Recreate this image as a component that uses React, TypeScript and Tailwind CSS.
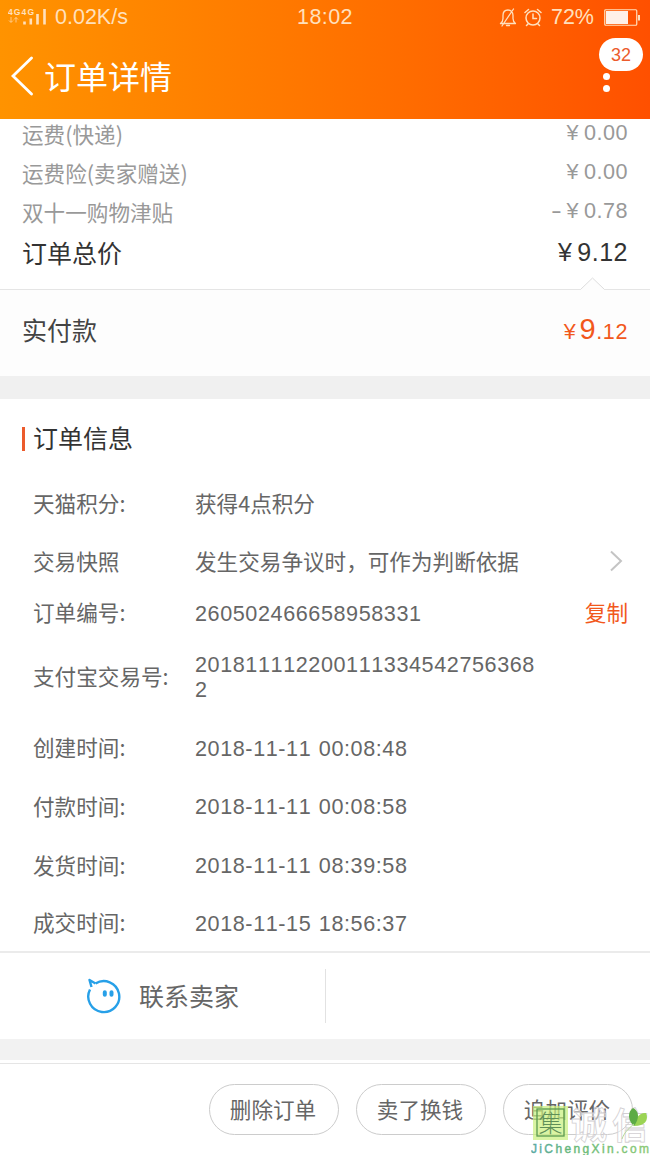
import clsx from 'clsx';

const fees = [
  { label: '运费(快递)', value: '￥0.00' },
  { label: '运费险(卖家赠送)', value: '￥0.00' },
  { label: '双十一购物津贴', value: '-￥0.78' },
];

const orderInfo = [
  { label: '天猫积分:', value: '获得4点积分', height: 'h-[58px]' },
  { label: '交易快照', value: '发生交易争议时，可作为判断依据', height: 'h-[58px]', arrow: true },
  { label: '订单编号:', value: '260502466658958331', height: 'h-11', copy: true },
  { label: '支付宝交易号:', value: '2018111122001113345427563682', height: 'h-[84px]' },
  { label: '创建时间:', value: '2018-11-11 00:08:48', height: 'h-[58px]' },
  { label: '付款时间:', value: '2018-11-11 00:08:58', height: 'h-[59px]' },
  { label: '发货时间:', value: '2018-11-11 08:39:58', height: 'h-[59px]' },
  { label: '成交时间:', value: '2018-11-15 18:56:37', height: 'h-14' },
];

const actions = ['删除订单', '卖了换钱', '追加评价'];

const num = "font-['Liberation_Sans','Noto_Sans_CJK_SC',sans-serif] [font-kerning:none]";

function Price({ value, className }: { value: string; className?: string }) {
  const [sign, amount] = value.split('￥');
  return (
    <span className={clsx(num, 'flex items-center tracking-[0.5px]', className)}>
      {sign && <span className="mr-1.5 scale-x-150">{sign}</span>}
      <span className="mr-[5px]">¥</span>
      <span>{amount}</span>
    </span>
  );
}

function StatusBar() {
  return (
    <div className={clsx(num, 'relative flex h-[34px] items-center justify-between pr-2.5 pl-2 text-[21.5px] text-[#ffe0bd]')}>
      <div className="flex items-center gap-2">
        <svg width="39" height="18" viewBox="0 0 39 18" fill="none">
          <text x="0" y="7" fontSize="8.5" fontWeight="bold" fill="currentColor" fontFamily="Liberation Sans" textLength="26">
            4G4G
          </text>
          <path d="M3 9v5M1 12.500l2 2 2-2M8 14.500v-5M6 11.500l2-2 2 2" stroke="currentColor" strokeWidth="1" opacity=".7" />
          <path d="M16.500 13.500v3M22.800 10.500v6M29.500 6v10.500M36.500 1v15.500" stroke="currentColor" strokeWidth="2.600" />
        </svg>
        <span>0.02K/s</span>
      </div>
      <span className="absolute left-1/2 -translate-x-1/2 tracking-[0.4px]">18:02</span>
      <div className="flex items-center">
        <svg width="18" height="19" viewBox="0 0 18 19" fill="none" stroke="currentColor" strokeWidth="1.300" strokeLinecap="round" strokeLinejoin="round">
          <path d="M1.500 15.500h15c-2-1.500-2.500-3-2.500-5V7.500C14 4 12 2 9 2S4 4 4 7.500v3c0 2-.5 3.500-2.500 5zM7.500 17.500h3M14.500 1L3 18" />
        </svg>
        <svg className="ml-[7px]" width="18" height="19" viewBox="0 0 18 19" fill="none" stroke="currentColor" strokeWidth="1.500" strokeLinecap="round">
          <circle cx="9" cy="10" r="7" />
          <path d="M9 6v4.500h3.500M1 4.500L4.500 1.500M17 4.500L13.500 1.500M4 16l-1.500 1.500M14 16l1.500 1.500" />
        </svg>
        <span className="ml-[9px]">72%</span>
        <svg className="ml-2.5 -mr-px" width="37" height="17" viewBox="0 0 37 17" fill="none">
          <rect x=".75" y=".75" width="32" height="15.500" rx="1" stroke="currentColor" strokeWidth="1.200" />
          <rect x="2" y="2" width="22" height="13" fill="#fff0e8" />
          <path d="M35 6v5.500" stroke="currentColor" strokeWidth="2" />
        </svg>
      </div>
    </div>
  );
}

function Header() {
  return (
    <header className="relative z-10 h-[119px] bg-linear-to-r from-[#ff9300] to-[#ff5000]">
      <StatusBar />
      <div className="flex h-[85px] items-center pb-0.5 pl-[11px] text-white">
        <svg width="22" height="40" viewBox="0 0 22 40" fill="none" stroke="currentColor" strokeWidth="2.800" strokeLinecap="round">
          <path d="M20.500 2L2 20l18.500 18" />
        </svg>
        <h1 className="ml-[11px] pb-px text-[32px] leading-none">订单详情</h1>
      </div>
      <div className="absolute top-[73px] left-[603px] flex flex-col gap-[5px]">
        <i className="size-[7px] rounded-full bg-white" />
        <i className="size-[7px] rounded-full bg-white" />
      </div>
      <span className={clsx(num, 'absolute top-[38px] left-[599px] flex h-[33px] w-11 items-center justify-center rounded-full bg-white text-lg text-[#ec5b2c]')}>
        32
      </span>
    </header>
  );
}

function Watermark() {
  return (
    <div className="absolute top-[1106px] left-[531px] h-[49px] w-[119px]">
      <svg width="119" height="49" viewBox="0 0 119 49">
        <defs>
          <linearGradient id="domain">
            <stop offset="0" stopColor="#5aa9a4" />
            <stop offset=".35" stopColor="#66b878" />
            <stop offset="1" stopColor="#8cc977" />
          </linearGradient>
        </defs>
        <rect x="2" y="0" width="35" height="34" fill="#c9ef7c" opacity=".7" />
        <rect x="6" y="3" width="27" height="27" fill="none" stroke="#5a9a50" strokeWidth="1.300" />
        <text x="7.500" y="25.500" fontSize="24" fill="#5f8f58" fontFamily="Noto Sans CJK SC" fontWeight="300">集</text>
        <text x="40" y="33" fontSize="36" fill="#fff" fillOpacity=".5" stroke="#d2cfd2" strokeWidth=".8" fontFamily="Noto Sans CJK SC" fontWeight="bold" textLength="77">诚信</text>
        <path d="M103 20c1-8 6-14 12-13 3 7-1 13-12 13z" fill="#9bd455" />
        <path d="M103 20c-6-5-7-14-1-18 6 3 7 10 1 18z" fill="#5cab45" />
        <path d="M103 18c-6 5-10 9-12 15" stroke="#b8d99a" fill="none" />
        <text x="0" y="47" fontSize="12" fill="url(#domain)" stroke="url(#domain)" strokeWidth=".4" fontFamily="Liberation Sans" textLength="118">JiChengXin.com</text>
      </svg>
    </div>
  );
}

export default function App() {
  return (
    <div className="relative flex h-[1155px] w-[650px] flex-col overflow-hidden bg-white font-['Noto_Sans_CJK_SC',sans-serif] text-[21.6px] text-[#666]">
      <Header />

      <section className="-mt-[3px] h-[173px] shrink-0 px-[22px] text-[#999]">
        {fees.map((fee) => (
          <div key={fee.label} className="flex h-[39px] items-center justify-between">
            <span className="pb-[3px]">{fee.label}</span>
            <Price value={fee.value} className="pb-1" />
          </div>
        ))}
        <div className="flex h-[43px] items-center justify-between text-[25px] text-[#333]">
          <span className="pb-[3px]">订单总价</span>
          <Price value="￥9.12" className="pb-1" />
        </div>
      </section>

      <section className="relative flex h-[87px] shrink-0 items-center justify-between border-t border-[#e5e5e5] bg-[#fdfdfd] px-[22px] pb-1.5">
        <svg className="absolute -top-[13px] left-[580px]" width="25" height="14" viewBox="0 0 25 14">
          <path d="M.5 12.500L12.500 1l12 11.500V14H.5z" fill="#fdfdfd" />
          <path d="M.5 12.500L12.500 1l12 11.500" fill="none" stroke="#ddd" />
        </svg>
        <span className="text-[25px] text-[#444]">实付款</span>
        <span className={clsx(num, 'flex items-baseline tracking-[0.6px] text-[#f2581c]')}>
          <span className="mr-[3px]">¥</span>
          <span className="text-[29px]">9</span>.12
        </span>
      </section>

      <div className="h-[23px] shrink-0 bg-[#f0f0f0]" />

      <section className="h-[552px] shrink-0 pr-[22px] pl-[33px]">
        <div className="-ml-[11px] flex h-[76px] items-center gap-2 pt-[3px] text-[25px] text-[#333]">
          <i className="h-6 w-[3px] bg-[#ec5b2c]" />
          <h2 className="pb-px">订单信息</h2>
        </div>
        {orderInfo.map((row) => {
          const isNumber = /^\d/.test(row.value);
          return (
            <div key={row.label} className={clsx('flex items-center', row.height)}>
              <span className="w-[162px] shrink-0 pb-px">{row.label}</span>
              <span
                className={clsx(
                  'w-[346px] leading-[25px] break-all',
                  isNumber ? [num, 'tracking-[0.58px] [word-spacing:1px]'] : 'pb-[3px]',
                )}
              >
                {row.value}
              </span>
              {row.arrow && (
                <svg className="mr-[5px] mb-0.5 ml-auto" width="14" height="22" viewBox="0 0 14 22" fill="none" stroke="#c4c4c4" strokeWidth="2">
                  <path d="M2 1.500L12 11 2 20.500" />
                </svg>
              )}
              {row.copy && <button className="ml-auto pb-px text-[#f2581c]">复制</button>}
            </div>
          );
        })}
      </section>

      <section className="flex h-[88px] shrink-0 items-center border-t-2 border-[#ebebeb]">
        <div className="flex h-[54px] w-[326px] items-center border-r border-[#e2e2e2] pl-[86px]">
          <svg width="36" height="36" viewBox="0 0 36 36" fill="none" stroke="#27a0e8" strokeWidth="2.400" strokeLinejoin="round">
            <path d="M9.500 5.500A15.500 15.500 0 1 1 4 11.500" />
            <path d="M5.500 9L3.500 2l6 3.500" />
            <path d="M18.800 14.200v2.600M25.500 14.200v2.600" strokeWidth="4" strokeLinecap="round" />
          </svg>
          <span className="ml-[17px] text-[25px]">联系卖家</span>
        </div>
      </section>

      <div className="h-[21px] shrink-0 bg-[#f2f2f2]" />

      <footer className="mt-[3px] flex shrink-0 justify-end gap-[17px] border-t border-[#e5e5e5] pt-5 pr-[17px]">
        {actions.map((action) => (
          <button key={action} className="h-[51px] w-[130px] rounded-full border border-[#ccc] pr-0.5">
            {action}
          </button>
        ))}
      </footer>

      <Watermark />
    </div>
  );
}
